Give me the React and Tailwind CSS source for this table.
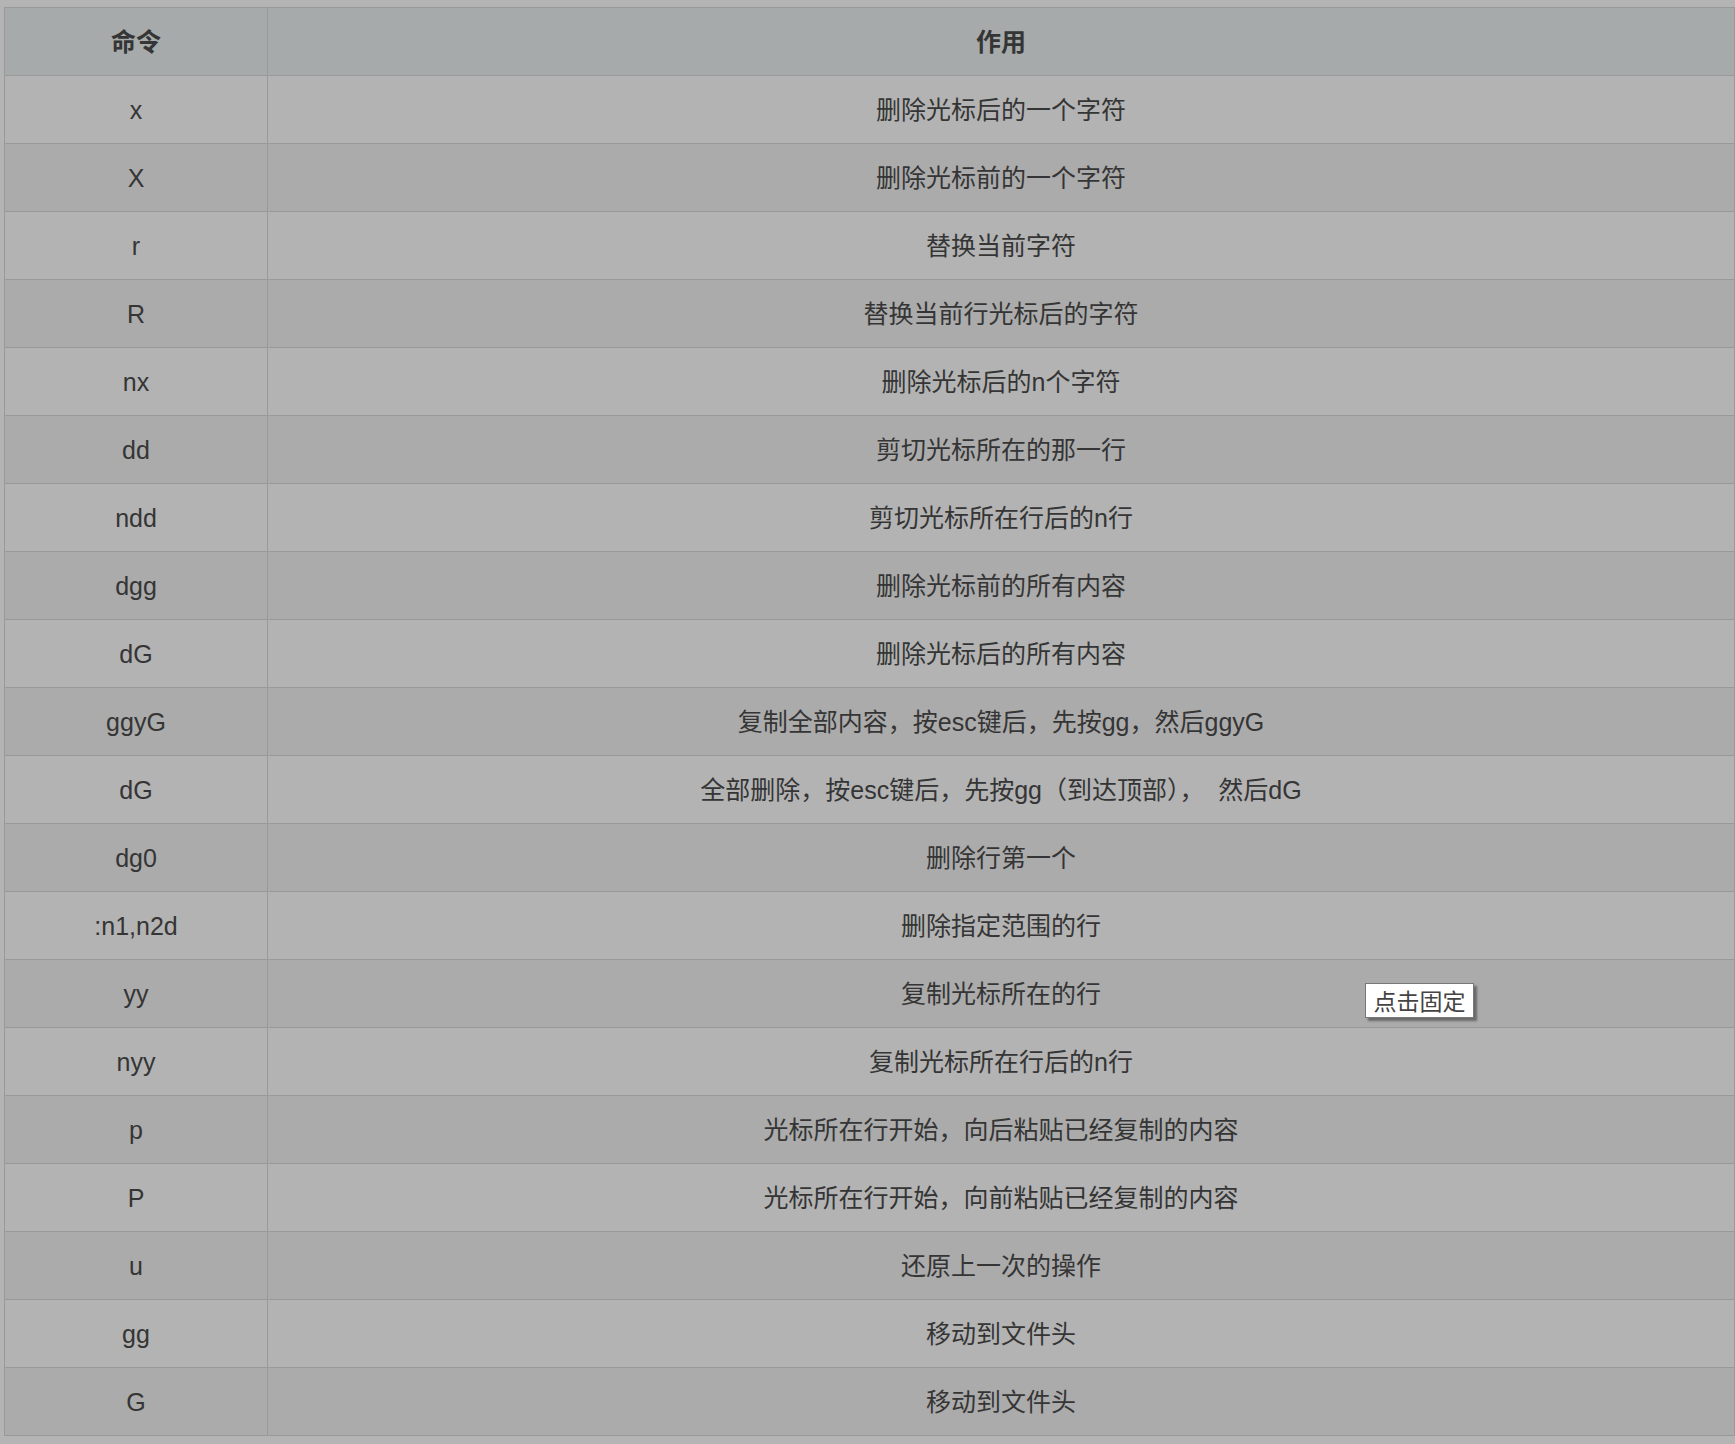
const rows = [
  ['x', '删除光标后的一个字符'],
  ['X', '删除光标前的一个字符'],
  ['r', '替换当前字符'],
  ['R', '替换当前行光标后的字符'],
  ['nx', '删除光标后的n个字符'],
  ['dd', '剪切光标所在的那一行'],
  ['ndd', '剪切光标所在行后的n行'],
  ['dgg', '删除光标前的所有内容'],
  ['dG', '删除光标后的所有内容'],
  ['ggyG', '复制全部内容，按esc键后，先按gg，然后ggyG'],
  ['dG', '全部删除，按esc键后，先按gg（到达顶部），\u00a0\u00a0然后dG'],
  ['dg0', '删除行第一个'],
  [':n1,n2d', '删除指定范围的行'],
  ['yy', '复制光标所在的行'],
  ['nyy', '复制光标所在行后的n行'],
  ['p', '光标所在行开始，向后粘贴已经复制的内容'],
  ['P', '光标所在行开始，向前粘贴已经复制的内容'],
  ['u', '还原上一次的操作'],
  ['gg', '移动到文件头'],
  ['G', '移动到文件头'],
]

export default function App() {
  return (
    <div
      className="relative min-h-screen w-[1735px] bg-[#b4b4b4] pl-[4px] pt-[7px] text-[25px] text-[#353535]"
      style={{ fontFamily: '"Liberation Sans", "Noto Sans CJK SC", sans-serif' }}
    >
      <table className="w-[1731px] table-fixed border-collapse border border-[#999999]">
        <colgroup>
          <col className="w-[263px]" />
          <col />
        </colgroup>
        <thead>
          <tr className="h-[68px] bg-[#a6aaaa]">
            <th className="border border-[#999999] p-0 pt-[2px] text-center font-bold">命令</th>
            <th className="border border-[#999999] p-0 pt-[2px] text-center font-bold">作用</th>
          </tr>
        </thead>
        <tbody>
          {rows.map(([cmd, desc], i) => (
            <tr key={i} className={i % 2 === 0 ? 'h-[68px] bg-[#b3b3b3]' : 'h-[68px] bg-[#ababab]'}>
              <td className="border border-[#999999] p-0 pt-[2px] text-center">{cmd}</td>
              <td className="border border-[#999999] p-0 pt-[2px] text-center">{desc}</td>
            </tr>
          ))}
        </tbody>
      </table>

      <div className="absolute left-[1365px] top-[983px] flex h-[35px] w-[109px] items-center justify-center border border-[#777777] bg-white pt-[3px] text-[23px] leading-none text-[#444444] shadow-[3px_3px_2px_#6a6a6a]">
        点击固定
      </div>
    </div>
  )
}
